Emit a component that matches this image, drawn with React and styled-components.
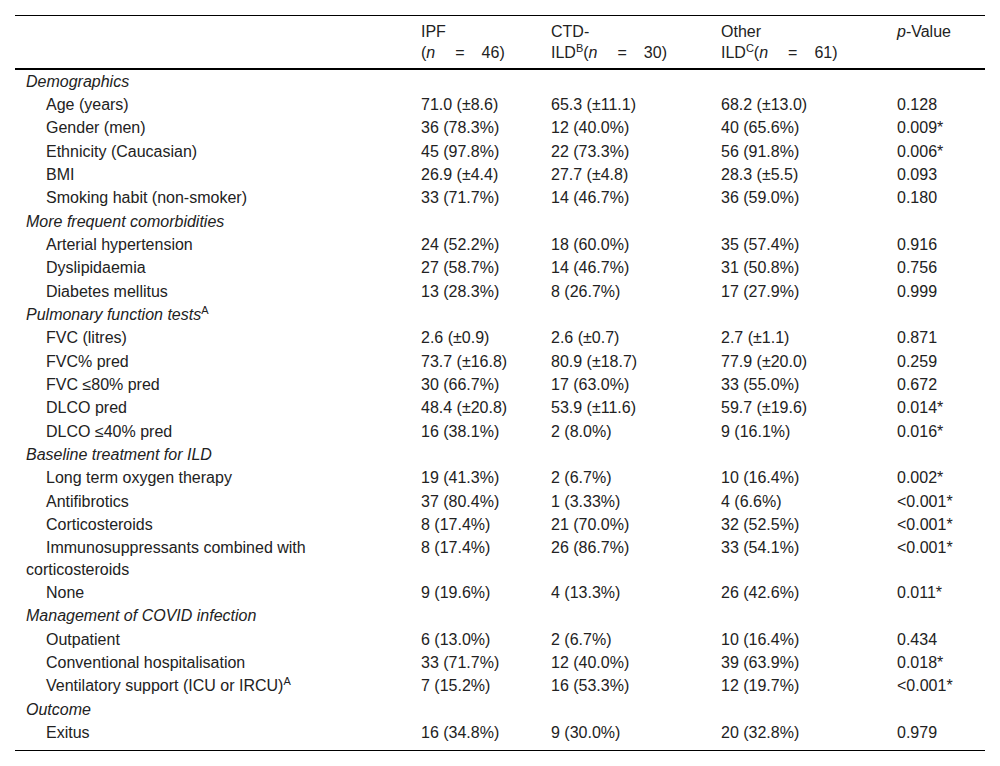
import React from 'react';
import styled, { createGlobalStyle } from 'styled-components';

const GlobalStyle = createGlobalStyle`
  html, body {
    margin: 0;
    padding: 0;
    background: #fff;
  }
  body {
    font-family: "Liberation Sans", Arial, sans-serif;
    color: #222;
  }
`;

const Page = styled.div`
  padding: 15px 15px 0 15px;
`;

const Table = styled.table`
  width: 970px;
  table-layout: fixed;
  border-collapse: collapse;
  font-size: 16px;
  line-height: 21.33px;
  border-top: 1px solid #000;
  border-bottom: 1px solid #000;
`;

const HeadCell = styled.th`
  text-align: left;
  font-weight: normal;
  vertical-align: top;
  padding: 5px 10px 4px 10px;
  border-bottom: 2px solid #000;
  width: ${(p) => p.$w}px;
`;

const Row = styled.tr`
  &:last-child td {
    padding-bottom: 7px;
  }
`;

const Cell = styled.td`
  vertical-align: top;
  padding: 1px 10px 1px 10px;
  ${(p) => p.$label && 'padding-left: 11px;'}
  ${(p) => p.$indent && 'text-indent: 20px;'}
  ${(p) => p.$section && 'font-style: italic;'}
`;

const Sup = styled.sup`
  font-size: 11px;
  line-height: 0;
  vertical-align: 6px;
  font-style: normal;
`;

const Eq = styled.span`
  display: inline-block;
  margin: 0 17px 0 20px;
`;

const Ital = styled.i`
  font-style: italic;
`;

const N = ({ n }) => (
  <>
    (<Ital>n</Ital>
    <Eq>=</Eq>
    {n})
  </>
);

const sections = [
  {
    title: 'Demographics',
    rows: [
      ['Age (years)', '71.0 (±8.6)', '65.3 (±11.1)', '68.2 (±13.0)', '0.128'],
      ['Gender (men)', '36 (78.3%)', '12 (40.0%)', '40 (65.6%)', '0.009*'],
      ['Ethnicity (Caucasian)', '45 (97.8%)', '22 (73.3%)', '56 (91.8%)', '0.006*'],
      ['BMI', '26.9 (±4.4)', '27.7 (±4.8)', '28.3 (±5.5)', '0.093'],
      ['Smoking habit (non-smoker)', '33 (71.7%)', '14 (46.7%)', '36 (59.0%)', '0.180'],
    ],
  },
  {
    title: 'More frequent comorbidities',
    rows: [
      ['Arterial hypertension', '24 (52.2%)', '18 (60.0%)', '35 (57.4%)', '0.916'],
      ['Dyslipidaemia', '27 (58.7%)', '14 (46.7%)', '31 (50.8%)', '0.756'],
      ['Diabetes mellitus', '13 (28.3%)', '8 (26.7%)', '17 (27.9%)', '0.999'],
    ],
  },
  {
    title: 'Pulmonary function tests',
    sup: 'A',
    rows: [
      ['FVC (litres)', '2.6 (±0.9)', '2.6 (±0.7)', '2.7 (±1.1)', '0.871'],
      ['FVC% pred', '73.7 (±16.8)', '80.9 (±18.7)', '77.9 (±20.0)', '0.259'],
      ['FVC ≤80% pred', '30 (66.7%)', '17 (63.0%)', '33 (55.0%)', '0.672'],
      ['DLCO pred', '48.4 (±20.8)', '53.9 (±11.6)', '59.7 (±19.6)', '0.014*'],
      ['DLCO ≤40% pred', '16 (38.1%)', '2 (8.0%)', '9 (16.1%)', '0.016*'],
    ],
  },
  {
    title: 'Baseline treatment for ILD',
    rows: [
      ['Long term oxygen therapy', '19 (41.3%)', '2 (6.7%)', '10 (16.4%)', '0.002*'],
      ['Antifibrotics', '37 (80.4%)', '1 (3.33%)', '4 (6.6%)', '<0.001*'],
      ['Corticosteroids', '8 (17.4%)', '21 (70.0%)', '32 (52.5%)', '<0.001*'],
      ['Immunosuppressants combined with corticosteroids', '8 (17.4%)', '26 (86.7%)', '33 (54.1%)', '<0.001*'],
      ['None', '9 (19.6%)', '4 (13.3%)', '26 (42.6%)', '0.011*'],
    ],
  },
  {
    title: 'Management of COVID infection',
    rows: [
      ['Outpatient', '6 (13.0%)', '2 (6.7%)', '10 (16.4%)', '0.434'],
      ['Conventional hospitalisation', '33 (71.7%)', '12 (40.0%)', '39 (63.9%)', '0.018*'],
      ['Ventilatory support (ICU or IRCU)', '7 (15.2%)', '16 (53.3%)', '12 (19.7%)', '<0.001*', 'A'],
    ],
  },
  {
    title: 'Outcome',
    rows: [['Exitus', '16 (34.8%)', '9 (30.0%)', '20 (32.8%)', '0.979']],
  },
];

export default function App() {
  return (
    <Page>
      <GlobalStyle />
      <Table>
        <thead>
          <tr>
            <HeadCell $w={376} />
            <HeadCell $w={110}>
              IPF
              <br />
              <N n={46} />
            </HeadCell>
            <HeadCell $w={150}>
              CTD-
              <br />
              ILD<Sup>B</Sup>
              <N n={30} />
            </HeadCell>
            <HeadCell $w={156}>
              Other
              <br />
              ILD<Sup>C</Sup>
              <N n={61} />
            </HeadCell>
            <HeadCell $w={78}>
              <Ital>p</Ital>-Value
            </HeadCell>
          </tr>
        </thead>
        <tbody>
          {sections.map((s) => (
            <React.Fragment key={s.title}>
              <Row>
                <Cell $label $section>
                  {s.title}
                  {s.sup && <Sup>{s.sup}</Sup>}
                </Cell>
                <Cell />
                <Cell />
                <Cell />
                <Cell />
              </Row>
              {s.rows.map((r) => (
                <Row key={r[0]}>
                  <Cell $label $indent>
                    {r[0]}
                    {r[5] && <Sup>{r[5]}</Sup>}
                  </Cell>
                  <Cell>{r[1]}</Cell>
                  <Cell>{r[2]}</Cell>
                  <Cell>{r[3]}</Cell>
                  <Cell>{r[4]}</Cell>
                </Row>
              ))}
            </React.Fragment>
          ))}
        </tbody>
      </Table>
    </Page>
  );
}
